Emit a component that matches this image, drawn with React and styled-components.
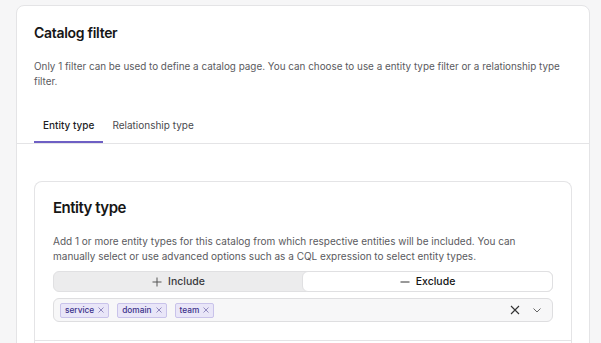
import React from 'react'
import { useState } from 'react'
import styled, { createGlobalStyle } from 'styled-components'

const GlobalStyle = createGlobalStyle`
body{
    margin: 0;
    background: #f6f6f7;
    font-family: Inter, "Noto Sans", sans-serif;
    color: #1d1d1f;
}
`

const tags = ['service', 'domain', 'team']

function App() {
    const [activeTab, setActiveTab] = useState('entity')
    const [mode, setMode] = useState('exclude')
    return (
        <Page>
            <GlobalStyle />
            <Card>
                <Header>
                    <Title>Catalog filter</Title>
                    <Text>
                        Only 1 filter can be used to define a catalog page. You can choose to use a entity type filter or a relationship type filter.
                    </Text>
                    <Tabs>
                        <Tab active={activeTab === 'entity'} onClick={() => setActiveTab('entity')}>Entity type</Tab>
                        <Tab active={activeTab === 'relationship'} onClick={() => setActiveTab('relationship')}>Relationship type</Tab>
                    </Tabs>
                </Header>
                <Body>
                    <Section>
                        <SectionTitle>Entity type</SectionTitle>
                        <Text size={10}>
                            Add 1 or more entity types for this catalog from which respective entities will be included. You can manually select or use advanced options such as a CQL expression to select entity types.
                        </Text>
                        <Segmented>
                            <Segment active={mode === 'include'} onClick={() => setMode('include')}>
                                <svg width="10" height="10" viewBox="0 0 10 10">
                                    <path d="M5 0.5v9M0.5 5h9" stroke="currentColor" strokeWidth="1" fill="none" />
                                </svg>
                                Include
                            </Segment>
                            <Segment active={mode === 'exclude'} onClick={() => setMode('exclude')}>
                                <svg width="10" height="10" viewBox="0 0 10 10">
                                    <path d="M0.5 5h9" stroke="currentColor" strokeWidth="1" fill="none" />
                                </svg>
                                Exclude
                            </Segment>
                        </Segmented>
                        <Select>
                            <TagList>
                                {tags.map((t) => (
                                    <Tag key={t}>
                                        {t}
                                        <svg width="6" height="6" viewBox="0 0 6 6">
                                            <path d="M0.5 0.5l5 5M5.5 0.5l-5 5" stroke="currentColor" strokeWidth="0.8" fill="none" />
                                        </svg>
                                    </Tag>
                                ))}
                            </TagList>
                            <Controls>
                                <svg width="10" height="10" viewBox="0 0 10 10">
                                    <path d="M1 1l8 8M9 1l-8 8" stroke="#333" strokeWidth="1.1" fill="none" />
                                </svg>
                                <svg width="10" height="10" viewBox="0 0 10 10">
                                    <path d="M1.5 3.5l3.5 3.5 3.5-3.5" stroke="#666" strokeWidth="1" fill="none" />
                                </svg>
                            </Controls>
                        </Select>
                    </Section>
                    <NextSection />
                </Body>
            </Card>
        </Page>
    )
}

const Page = styled.div`
padding: 5px 11px 0 16px;
height: 343px;
box-sizing: border-box;
overflow: hidden;
`
const Card = styled.div`
background: white;
border: 1px solid #e4e4e6;
border-radius: 8px;
`
const Header = styled.div`
padding: 17px 18px 0 17px;
border-bottom: 1px solid #e4e4e6;
`
const Title = styled.h2`
margin: 0 0 16px;
font-size: 14px;
line-height: 20px;
font-weight: 600;
letter-spacing: -0.3px;
color: #161616;
`
const Text = styled.p`
margin: 0;
font-size: ${(p) => p.size || 9.9}px;
line-height: 15px;
color: #5a5a5e;
`
const Tabs = styled.div`
display: flex;
margin-top: 21px;
`
const Tab = styled.div`
padding: 8px 9px 8px;
font-size: 10px;
line-height: 15px;
font-weight: ${(p) => (p.active ? 500 : 400)};
color: ${(p) => (p.active ? '#1d1d1f' : '#4a4a4e')};
border-bottom: 2px solid ${(p) => (p.active ? '#6e5fc4' : 'transparent')};
cursor: pointer;
`
const Body = styled.div`
padding: 37px 17px 0 17px;
`
const Section = styled.div`
border: 1px solid #e4e4e6;
border-bottom: none;
border-radius: 8px 8px 0 0;
padding: 16px 18px 18px;
`
const SectionTitle = styled.h3`
margin: 0 0 16px;
font-size: 15px;
line-height: 20px;
font-weight: 600;
letter-spacing: -0.5px;
color: #161616;
`
const Segmented = styled.div`
display: flex;
margin-top: 7px;
height: 21px;
background: #ececed;
border: 1px solid #e0e0e2;
border-radius: 6px;
box-sizing: border-box;
`
const Segment = styled.div`
flex: 1;
display: flex;
align-items: center;
justify-content: center;
gap: 6px;
font-size: 10.5px;
font-weight: 500;
color: ${(p) => (p.active ? '#161616' : '#3a3a3e')};
background: ${(p) => (p.active ? 'white' : 'transparent')};
border: 1px solid ${(p) => (p.active ? '#e0e0e2' : 'transparent')};
margin: -1px;
border-radius: 6px;
cursor: pointer;
svg{
    color: ${(p) => (p.active ? '#333' : '#555')};
}
`
const Select = styled.div`
display: flex;
align-items: center;
justify-content: space-between;
margin-top: 6px;
height: 24px;
padding: 0 10px 0 6px;
background: #f7f7f8;
border: 1px solid #dedee0;
border-radius: 6px;
box-sizing: border-box;
`
const TagList = styled.div`
display: flex;
gap: 8px;
`
const Tag = styled.span`
display: flex;
align-items: center;
gap: 4px;
height: 15px;
padding: 0 4px;
font-size: 8.3px;
font-weight: 500;
color: #3b318a;
background: #e9e6f8;
border: 1px solid #c9c3ea;
border-radius: 2px;
box-sizing: border-box;
svg{
    color: #7a72b0;
}
`
const Controls = styled.div`
display: flex;
align-items: center;
gap: 12px;
`
const NextSection = styled.div`
border-left: 1px solid #e4e4e6;
border-right: 1px solid #e4e4e6;
border-top: 1px solid #e4e4e6;
height: 40px;
`

export default App
